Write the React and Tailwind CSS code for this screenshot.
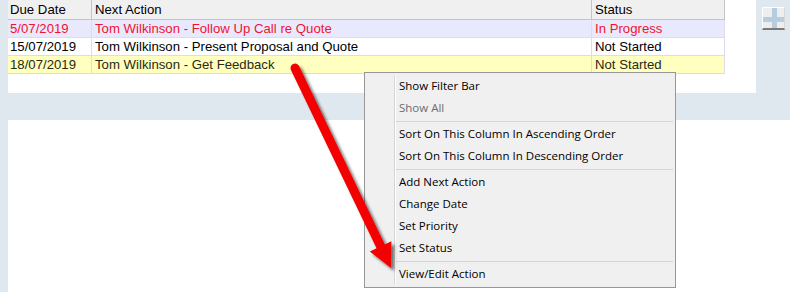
import React from "react";

const rows = [
  { date: "5/07/2019", action: "Tom Wilkinson - Follow Up Call re Quote", status: "In Progress", bg: "bg-[#e9e9fd]", text: "text-[#f2122e]" },
  { date: "15/07/2019", action: "Tom Wilkinson - Present Proposal and Quote", status: "Not Started", bg: "bg-white", text: "text-black" },
  { date: "18/07/2019", action: "Tom Wilkinson - Get Feedback", status: "Not Started", bg: "bg-[#ffffc0]", text: "text-[#2a2a10]" },
];

const menu = [
  { label: "Show Filter Bar" },
  { label: "Show All", disabled: true },
  { sep: true },
  { label: "Sort On This Column In Ascending Order" },
  { label: "Sort On This Column In Descending Order" },
  { sep: true },
  { label: "Add Next Action" },
  { label: "Change Date" },
  { label: "Set Priority" },
  { label: "Set Status" },
  { sep: true },
  { label: "View/Edit Action" },
];

function Arrow() {
  const T = [295, 68];
  const P = [391, 268];
  const dx = P[0] - T[0];
  const dy = P[1] - T[1];
  const L = Math.hypot(dx, dy);
  const u = [dx / L, dy / L];
  const n = [-u[1], u[0]];
  const B = [P[0] - 24 * u[0], P[1] - 24 * u[1]];
  const w1 = [B[0] + 12 * n[0], B[1] + 12 * n[1]];
  const w2 = [B[0] - 12 * n[0], B[1] - 12 * n[1]];
  const B2 = [B[0] + 3 * u[0], B[1] + 3 * u[1]];
  return (
    <svg className="absolute left-0 top-0 pointer-events-none" width="790" height="292">
      <defs>
        <filter id="sh" x="-20%" y="-20%" width="140%" height="140%">
          <feDropShadow dx="3" dy="3" stdDeviation="1.8" floodColor="#000" floodOpacity="0.55" />
        </filter>
      </defs>
      <g filter="url(#sh)">
        <line x1={T[0]} y1={T[1]} x2={B2[0]} y2={B2[1]} stroke="#f40000" strokeWidth="9" strokeLinecap="round" />
        <polygon points={`${w1[0]},${w1[1]} ${P[0]},${P[1]} ${w2[0]},${w2[1]}`} fill="#f40000" />
      </g>
    </svg>
  );
}

export default function App() {
  return (
    <div className="relative w-[790px] h-[292px] overflow-hidden bg-[#dfe7ef] pl-2 flex flex-col" style={{ fontFamily: '"Liberation Sans", Arial, sans-serif' }}>
      <div className="flex h-[93px]">
        <div className="w-[748px] bg-white">
          <div className="w-[717px] text-[13.2px] leading-none">
            <div className="flex h-[20px] bg-[#f0f0f0] border-b border-[#c4c4c4] text-black">
              <div className="w-[84px] border-r border-[#c4c4c4] pl-[2px] flex items-center">Due Date</div>
              <div className="w-[500px] border-r border-[#c4c4c4] pl-[3px] flex items-center">Next Action</div>
              <div className="flex-1 pl-[3px] flex items-center border-r border-[#c4c4c4]">Status</div>
            </div>
            {rows.map((r, i) => (
              <div key={i} className={`flex h-[18px] border-b border-[#dcdcea] ${r.bg} ${r.text}`}>
                <div className="w-[84px] border-r border-[#dcdcea] pl-[2px] flex items-center">{r.date}</div>
                <div className="w-[500px] border-r border-[#dcdcea] pl-[3px] flex items-center">{r.action}</div>
                <div className="flex-1 pl-[3px] flex items-center border-r border-[#dcdcea]">{r.status}</div>
              </div>
            ))}
          </div>
        </div>
        <div className="flex-1 pl-[6px] pt-[7px]">
          <div className="relative w-[23px] h-[23px] bg-[#eeeeee] border-t border-l border-white border-b-2 border-b-[#7a7a7a] border-r border-r-[#d8d8d8]">
            <div className="absolute left-[9px] top-0 w-[5px] h-full bg-[#b6cde0]" />
            <div className="absolute top-[9px] left-0 h-[5px] w-full bg-[#b6cde0]" />
          </div>
        </div>
      </div>
      <div className="h-[27px]" />
      <div className="flex-1 bg-white" />

      <div className="absolute left-[364px] top-[72px] w-[312px] h-[216px] bg-[#f0f0f0] border border-[#979797] py-[2px] pr-[2px]" style={{ fontFamily: '"Open Sans", "Noto Sans", sans-serif' }}>
        <div className="absolute left-[29px] top-[2px] bottom-[2px] w-px bg-[#d5d5d5]" />
        <div className="absolute left-[30px] top-[2px] bottom-[2px] w-px bg-white" />
        {menu.map((m, i) =>
          m.sep ? (
            <div key={i} className="h-[4px] flex items-center pl-[30px]">
              <div className="h-px w-full bg-[#d5d5d5]" />
            </div>
          ) : (
            <div key={i} className={`h-[22px] flex items-center pl-[34px] text-[11.5px] ${m.disabled ? "text-[#6d6d6d]" : "text-black"}`}>
              {m.label}
            </div>
          )
        )}
      </div>
      <Arrow />
    </div>
  );
}
